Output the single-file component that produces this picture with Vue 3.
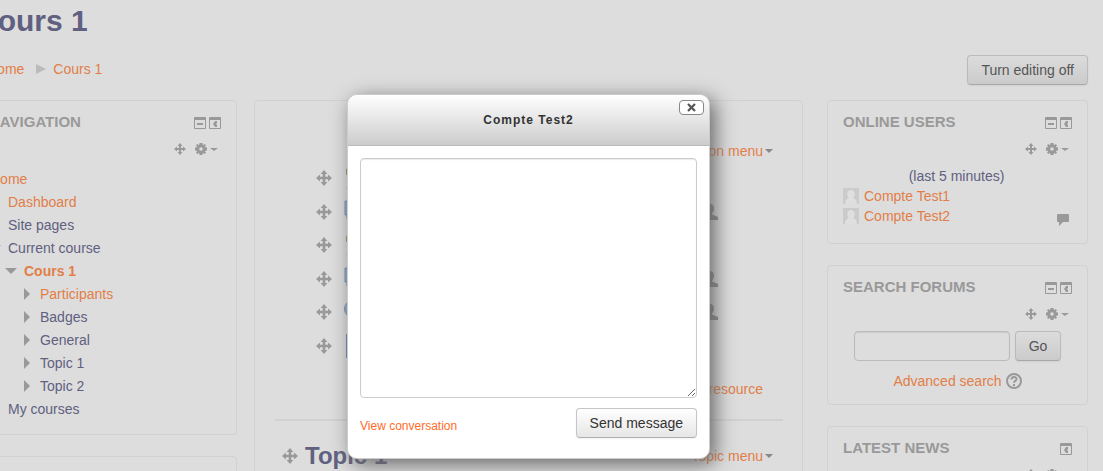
<script setup>
const tree = [
  { label: 'Home', level: 0, href: true },
  { label: 'Dashboard', level: 1, href: true },
  { label: 'Site pages', level: 1, arrow: 'right' },
  { label: 'Current course', level: 1, arrow: 'down' },
  { label: 'Cours 1', level: 2, href: true, bold: true, arrow: 'down' },
  { label: 'Participants', level: 3, href: true, arrow: 'right' },
  { label: 'Badges', level: 3, arrow: 'right' },
  { label: 'General', level: 3, arrow: 'right' },
  { label: 'Topic 1', level: 3, arrow: 'right' },
  { label: 'Topic 2', level: 3, arrow: 'right' },
  { label: 'My courses', level: 1, arrow: 'right' },
]
const activities = [
  { kind: 'assign' },
  { kind: 'forum', group: true },
  { kind: 'assign' },
  { kind: 'forum', group: true },
  { kind: 'wiki', group: true },
  { kind: 'page' },
]
const users = [{ name: 'Compte Test1' }, { name: 'Compte Test2', chat: true }]
const blocks = [
  { id: 'users', title: 'Online users', collapse: true },
  { id: 'search', title: 'Search forums', collapse: true },
  { id: 'news', title: 'Latest news', collapse: false },
]
</script>

<template>
  <div class="screen">
    <svg class="defs" aria-hidden="true">
      <symbol id="move" viewBox="0 0 16 16">
        <path d="M8 0 11.4 4H9.3V6.7H12V4.6L16 8 12 11.4V9.3H9.3V12H11.4L8 16 4.6 12H6.7V9.3H4V11.4L0 8 4 4.6V6.7H6.7V4H4.6Z" />
      </symbol>
      <symbol id="gear" viewBox="0 0 12 12">
        <path fill-rule="evenodd" d="M4.5 0H7.5L7.7 1.6 8.4 2 9.7 1 11 2.3 10 3.6 10.4 4.3 12 4.5V7.5L10.4 7.7 10 8.4 11 9.7 9.7 11 8.4 10 7.7 10.4 7.5 12H4.5L4.3 10.4 3.6 10 2.3 11 1 9.7 2 8.4 1.6 7.7 0 7.5V4.5L1.6 4.3 2 3.6 1 2.3 2.3 1 3.6 2 4.3 1.6ZM6 4.200A1.800 1.800 0 1 0 6 7.800 1.800 1.800 0 1 0 6 4.200Z" />
      </symbol>
      <symbol id="collapse" viewBox="0 0 12 12">
        <path fill-rule="evenodd" d="M1 0H11Q12 0 12 1V11Q12 12 11 12H1Q0 12 0 11V1Q0 0 1 0ZM1 3V11H11V3ZM3 6H9V8H3Z" />
      </symbol>
      <symbol id="dock" viewBox="0 0 12 12">
        <path fill-rule="evenodd" d="M1 0H11Q12 0 12 1V11Q12 12 11 12H1Q0 12 0 11V1Q0 0 1 0ZM1 3V11H11V3ZM6 4H8V6L7 7 8 8V10H6L4 7Z" />
      </symbol>
      <symbol id="person" viewBox="0 0 16 16">
        <path d="M8 0C10.5 0 12 1.8 12 4.5 12 6.5 11 8.5 10 9.5V10.5L16 13V16H0V13L6 10.5V9.5C5 8.5 4 6.5 4 4.5 4 1.8 5.5 0 8 0Z" />
      </symbol>
    </svg>

    <div class="page">
      <header>
        <h1>Cours 1</h1>
        <div class="navbar">
          <nav class="crumbs" aria-label="Breadcrumb">
            <a href="#">Home</a>
            <span class="crumb-arrow"></span>
            <a href="#">Cours 1</a>
          </nav>
          <button class="btn dim" type="button">Turn editing off</button>
        </div>
      </header>

      <div class="columns">
        <aside class="side">
          <section class="block nav-block">
            <div class="block-head">
              <h2>Navigation</h2>
              <div class="head-icons">
                <svg><use href="#collapse" /></svg>
                <svg><use href="#dock" /></svg>
              </div>
            </div>
            <div class="commands">
              <svg><use href="#move" /></svg>
              <svg><use href="#gear" /></svg>
              <i class="caret small"></i>
            </div>
            <ul class="tree">
              <li v-for="item in tree" :key="item.label" :class="'level-' + item.level">
                <span class="marker"><i v-if="item.arrow" :class="'arrow-' + item.arrow"></i></span>
                <a v-if="item.href" href="#" :class="{ bold: item.bold }">{{ item.label }}</a>
                <span v-else>{{ item.label }}</span>
              </li>
            </ul>
          </section>
          <section class="block"><div class="block-head"></div></section>
        </aside>

        <main class="course">
          <div class="menu-line"><a href="#">Add section menu</a><i class="caret"></i></div>
          <ul class="activities">
            <li v-for="(a, i) in activities" :key="i">
              <svg class="move"><use href="#move" /></svg>
              <svg class="kind" viewBox="0 0 24 24">
                <g v-if="a.kind === 'assign'">
                  <path d="M2 3Q7 1 12 3V7L6 7 2 9Z" fill="#8ca052" />
                  <path d="M2 21.500H20" stroke="#bbb" />
                </g>
                <path v-else-if="a.kind === 'forum'" d="M1 1H22V15H8L3 19V15H1Z" fill="#93aacb" stroke="#6e8dba" />
                <circle v-else-if="a.kind === 'wiki'" cx="9" cy="9" r="8.500" fill="#93aacb" stroke="#6e8dba" />
                <path v-else d="M2.500 0V24H20V0Z" fill="#b4c3d8" stroke="#6487b8" />
              </svg>
              <svg v-if="a.group" class="group"><use href="#person" /></svg>
            </li>
          </ul>
          <a class="add" href="#">Add an activity or resource</a>
          <hr />
          <div class="topic">
            <svg class="move"><use href="#move" /></svg>
            <h3>Topic 1</h3>
            <div class="topic-menu"><a href="#">Topic menu</a><i class="caret"></i></div>
          </div>
        </main>

        <aside class="side">
          <section v-for="b in blocks" :key="b.id" class="block">
            <div class="block-head">
              <h2>{{ b.title }}</h2>
              <div class="head-icons">
                <svg v-if="b.collapse"><use href="#collapse" /></svg>
                <svg><use href="#dock" /></svg>
              </div>
            </div>
            <div class="commands">
              <svg><use href="#move" /></svg>
              <svg><use href="#gear" /></svg>
              <i class="caret small"></i>
            </div>
            <div v-if="b.id === 'users'" class="online">
              <p>(last 5 minutes)</p>
              <ul>
                <li v-for="u in users" :key="u.name">
                  <svg class="avatar" viewBox="0 0 16 16">
                    <rect width="16" height="16" fill="#cbcbcb" />
                    <path d="M8 2C10.300 2 11.700 3.700 11.700 6 11.700 8 11 9 10.200 10 13 11 14 13 14 16H2C2 13 3 11 5.800 10 5 9 4.300 8 4.300 6 4.300 3.700 5.700 2 8 2Z" fill="#dfdfdf" />
                  </svg>
                  <a href="#">{{ u.name }}</a>
                  <svg v-if="u.chat" class="chat" viewBox="0 0 12 12">
                    <path d="M1 0H11Q12 0 12 1V7Q12 8 11 8H6L2 12V8H1Q0 8 0 7V1Q0 0 1 0Z" />
                  </svg>
                </li>
              </ul>
            </div>
            <form v-if="b.id === 'search'" class="search" @submit.prevent>
              <div class="search-row">
                <input type="text" aria-label="Search forums" />
                <button class="btn dim" type="submit">Go</button>
              </div>
              <div class="advanced">
                <a href="#">Advanced search</a>
                <svg viewBox="0 0 16 16">
                  <circle cx="8" cy="8" r="7" fill="none" stroke="#999" stroke-width="2" />
                  <path d="M5.500 6.500C5.500 3.300 10.500 3.300 10.500 6.200 10.500 8 8 7.800 8 9.800" fill="none" stroke="#999" stroke-width="2" />
                  <rect x="7" y="11" width="2" height="2" />
                </svg>
              </div>
            </form>
          </section>
        </aside>
      </div>
    </div>

    <div class="dialog" role="dialog" aria-labelledby="dialog-title">
      <div class="dialog-head">
        <h2 id="dialog-title">Compte Test2</h2>
        <button class="close" type="button" aria-label="Close">
          <svg viewBox="0 0 9 9"><path d="M1 1 8 8M8 1 1 8" stroke="#555" stroke-width="2.200" /></svg>
        </button>
      </div>
      <form class="dialog-body" @submit.prevent>
        <textarea aria-label="Message"></textarea>
        <div class="dialog-foot">
          <a href="#">View conversation</a>
          <button class="btn" type="submit">Send message</button>
        </div>
      </form>
    </div>
  </div>
</template>

<style>
html,
body {
  overflow: hidden;
  background: #ddd;
}
</style>

<style scoped>
* {
  box-sizing: border-box;
}
.screen {
  position: relative;
  height: 100vh;
  overflow: hidden;
  background: #ddd;
  color: #606080;
  font: 14px/20px "Liberation Sans", Arial, sans-serif;
}
.defs {
  position: absolute;
  width: 0;
  height: 0;
}
svg {
  flex: none;
  width: 12px;
  height: 12px;
  fill: #999;
}
h1, h2, h3, p, ul {
  margin: 0;
  padding: 0;
}
ul {
  list-style: none;
}
a {
  color: #e27d48;
  text-decoration: none;
}
.page {
  margin: 0 15px 0 -24px;
}
h1 {
  font-size: 30px;
  line-height: 42px;
}
.navbar {
  display: flex;
  align-items: center;
  justify-content: space-between;
  margin: 13px 0 15px;
}
.crumbs {
  display: flex;
  align-items: center;
  padding: 0 0 2px 11px;
}
.crumb-arrow {
  margin: 0 7px 0 12px;
  border: 5px solid transparent;
  border-left: 10px solid #bbb;
  border-right: 0;
}
.btn {
  height: 30px;
  padding: 0 13px;
  border: 1px solid #bbb;
  border-color: #c5c5c5 #c5c5c5 #b0b0b0;
  border-radius: 4px;
  background: linear-gradient(#fff, #e6e6e6);
  box-shadow: 0 1px 2px rgba(0, 0, 0, 0.06);
  color: #333;
  font: 14px/20px "Liberation Sans", Arial, sans-serif;
}
.btn.dim {
  border-color: #bbb #bbb #a8a8a8;
  background: linear-gradient(#dcdcdc, #cbcbcb);
  color: #555;
}
.columns {
  display: grid;
  grid-template-columns: 261px 1fr 261px;
}
.block {
  margin-bottom: 21px;
  padding: 11px 15px;
  border: 1px solid #d1d1d1;
  border-radius: 4px;
}
.block-head {
  display: flex;
  align-items: center;
  justify-content: space-between;
  min-height: 20px;
}
.block h2 {
  color: #999;
  font-size: 15px;
  line-height: 20px;
  text-transform: uppercase;
}
.head-icons {
  display: flex;
  gap: 3px;
  padding-top: 2px;
}
.commands {
  display: flex;
  align-items: center;
  justify-content: flex-end;
  gap: 9px;
  height: 20px;
  margin-top: 7px;
  padding-right: 3px;
}
.caret {
  border: 4px solid transparent;
  border-top-color: #888;
  border-bottom: 0;
}
.caret.small {
  margin-left: -6px;
  border-width: 3px 4px 0;
  border-top-color: #999;
}
.nav-block {
  padding-bottom: 14px;
  padding-left: 12px;
}
.tree {
  margin-top: 8px;
}
.tree li {
  display: flex;
  align-items: center;
  height: 23px;
}
.marker {
  display: flex;
  width: 19px;
  padding-left: 3px;
}
.level-0 .marker {
  width: 0;
  padding: 0;
}
.tree .level-0 {
  padding-left: 1px;
}
.level-2 {
  padding-left: 16px;
}
.level-3 {
  padding-left: 32px;
}
.bold {
  font-weight: bold;
}
.arrow-right {
  border: 6px solid transparent;
  border-left-color: #999;
  border-right: 0;
}
.arrow-down {
  margin-left: -3px;
  border: 6px solid transparent;
  border-top-color: #999;
  border-bottom: 0;
}
.course {
  margin: 0 24px 0 17px;
  padding: 40px 19px 0 20px;
  border: 1px solid #d1d1d1;
  border-radius: 4px;
}
.menu-line,
.topic-menu {
  display: flex;
  align-items: center;
  justify-content: flex-end;
  gap: 2px;
  padding-right: 10px;
}
.activities li {
  display: flex;
  align-items: center;
  height: 34px;
  padding: 0 65px 0 41px;
}
.activities li:nth-child(even) {
  height: 33px;
}
.activities {
  margin-bottom: 17px;
}
.move {
  width: 16px;
  height: 16px;
}
.kind {
  width: 24px;
  height: 24px;
  margin-left: 12px;
}
.group {
  width: 16px;
  height: 16px;
  margin-left: auto;
  fill: #888;
}
.add {
  display: block;
  padding-right: 20px;
  text-align: right;
}
hr {
  margin: 20px 0;
  border: 0;
  border-top: 2px solid #d1d1d1;
}
.topic {
  display: flex;
  align-items: center;
  padding-left: 7px;
}
.topic h3 {
  margin-left: 7px;
  font-size: 24px;
  line-height: 30px;
}
.topic-menu {
  margin-left: auto;
}
.online {
  margin-top: 7px;
  padding-bottom: 6px;
}
.online p {
  padding-right: 2px;
  text-align: center;
}
.online li {
  display: flex;
  align-items: center;
  padding-right: 3px;
}
.online a {
  margin-left: 5px;
}
.avatar {
  width: 16px;
  height: 16px;
}
.chat {
  margin: 8px 0 0 auto;
}
.search {
  margin-top: 7px;
  padding-bottom: 2px;
}
.search-row {
  display: flex;
  justify-content: center;
  gap: 5px;
}
.search input {
  width: 156px;
  height: 30px;
  border: 1px solid #bbb;
  border-radius: 4px;
  background: #ddd;
  box-shadow: inset 0 1px 1px rgba(0, 0, 0, 0.08);
}
.advanced {
  display: flex;
  align-items: center;
  justify-content: center;
  gap: 4px;
  margin-top: 10px;
}
.advanced svg {
  width: 16px;
  height: 16px;
}
.dialog {
  position: absolute;
  top: 94px;
  left: 347px;
  width: 363px;
  border: 1px solid #ccc;
  border-radius: 10px;
  background: #fff;
  box-shadow: 5px 5px 20px #666;
}
.dialog-head {
  display: flex;
  align-items: center;
  justify-content: center;
  height: 51px;
  border-bottom: 1px solid #bbb;
  border-radius: 10px 10px 0 0;
  background: linear-gradient(#fff, #ccc);
}
.dialog h2 {
  color: #333;
  font-size: 12px;
  letter-spacing: 1px;
}
.close {
  position: absolute;
  top: 5px;
  right: 5px;
  display: flex;
  align-items: center;
  justify-content: center;
  width: 25px;
  height: 15px;
  padding: 0;
  border: 1px solid #888;
  border-radius: 4px;
  background: #fff;
}
.close svg {
  width: 9px;
  height: 9px;
}
.dialog-body {
  padding: 12px 12px 20px;
}
textarea {
  display: block;
  width: 100%;
  height: 240px;
  border: 1px solid #ccc;
  border-radius: 4px;
  box-shadow: inset 0 1px 1px rgba(0, 0, 0, 0.08);
}
.dialog-foot {
  display: flex;
  align-items: center;
  justify-content: space-between;
  margin-top: 10px;
}
.dialog-foot a {
  padding-top: 5px;
  color: #ff6c26;
  font-size: 12px;
}
</style>
